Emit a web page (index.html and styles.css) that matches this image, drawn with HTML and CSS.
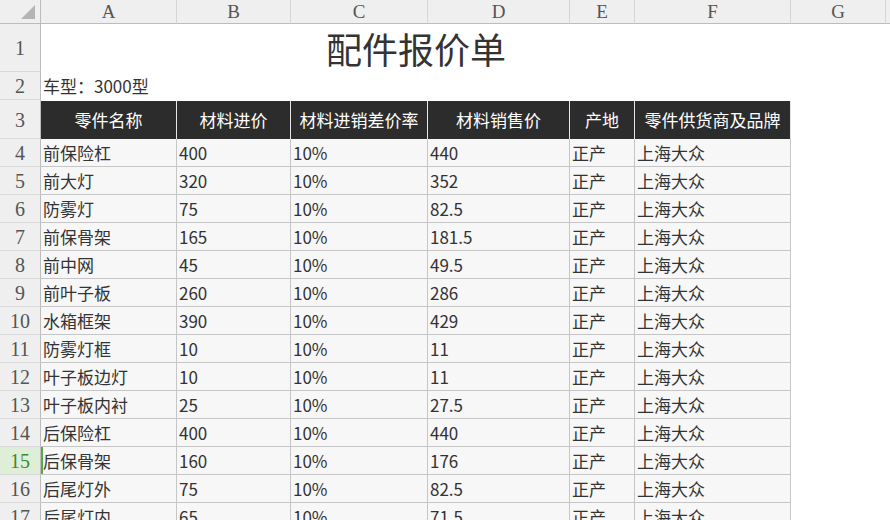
FILE: index.html
```html
<!DOCTYPE html>
<html lang="zh">
<head>
<meta charset="utf-8">
<link rel="stylesheet" href="styles.css">
</head>
<body>
<div class="sheet">
  <div class="ch corner"><span class="tri"></span></div>
  <div class="ch">A</div><div class="ch">B</div><div class="ch">C</div><div class="ch">D</div><div class="ch">E</div><div class="ch">F</div><div class="ch">G</div><div class="ch last"></div>

  <div class="rh">1</div>
  <div class="title">配件报价单</div><div class="blank"></div><div class="blank"></div>

  <div class="rh">2</div>
  <div class="car">车型：3000型</div><div class="blank"></div><div class="blank"></div><div class="blank"></div><div class="blank"></div><div class="blank"></div><div class="blank"></div><div class="blank"></div>

  <div class="rh">3</div>
  <div class="hd">零件名称</div><div class="hd">材料进价</div><div class="hd">材料进销差价率</div><div class="hd">材料销售价</div><div class="hd">产地</div><div class="hd">零件供货商及品牌</div><div class="blank"></div><div class="blank"></div>

  <div class="rh">4</div><div class="c">前保险杠</div><div class="c">400</div><div class="c">10%</div><div class="c">440</div><div class="c">正产</div><div class="c">上海大众</div><div class="blank"></div><div class="blank"></div>
  <div class="rh">5</div><div class="c">前大灯</div><div class="c">320</div><div class="c">10%</div><div class="c">352</div><div class="c">正产</div><div class="c">上海大众</div><div class="blank"></div><div class="blank"></div>
  <div class="rh">6</div><div class="c">防雾灯</div><div class="c">75</div><div class="c">10%</div><div class="c">82.5</div><div class="c">正产</div><div class="c">上海大众</div><div class="blank"></div><div class="blank"></div>
  <div class="rh">7</div><div class="c">前保骨架</div><div class="c">165</div><div class="c">10%</div><div class="c">181.5</div><div class="c">正产</div><div class="c">上海大众</div><div class="blank"></div><div class="blank"></div>
  <div class="rh">8</div><div class="c">前中网</div><div class="c">45</div><div class="c">10%</div><div class="c">49.5</div><div class="c">正产</div><div class="c">上海大众</div><div class="blank"></div><div class="blank"></div>
  <div class="rh">9</div><div class="c">前叶子板</div><div class="c">260</div><div class="c">10%</div><div class="c">286</div><div class="c">正产</div><div class="c">上海大众</div><div class="blank"></div><div class="blank"></div>
  <div class="rh">10</div><div class="c">水箱框架</div><div class="c">390</div><div class="c">10%</div><div class="c">429</div><div class="c">正产</div><div class="c">上海大众</div><div class="blank"></div><div class="blank"></div>
  <div class="rh">11</div><div class="c">防雾灯框</div><div class="c">10</div><div class="c">10%</div><div class="c">11</div><div class="c">正产</div><div class="c">上海大众</div><div class="blank"></div><div class="blank"></div>
  <div class="rh">12</div><div class="c">叶子板边灯</div><div class="c">10</div><div class="c">10%</div><div class="c">11</div><div class="c">正产</div><div class="c">上海大众</div><div class="blank"></div><div class="blank"></div>
  <div class="rh">13</div><div class="c">叶子板内衬</div><div class="c">25</div><div class="c">10%</div><div class="c">27.5</div><div class="c">正产</div><div class="c">上海大众</div><div class="blank"></div><div class="blank"></div>
  <div class="rh">14</div><div class="c">后保险杠</div><div class="c">400</div><div class="c">10%</div><div class="c">440</div><div class="c">正产</div><div class="c">上海大众</div><div class="blank"></div><div class="blank"></div>
  <div class="rh active">15</div><div class="c selected">后保骨架</div><div class="c">160</div><div class="c">10%</div><div class="c">176</div><div class="c">正产</div><div class="c">上海大众</div><div class="blank"></div><div class="blank"></div>
  <div class="rh">16</div><div class="c">后尾灯外</div><div class="c">75</div><div class="c">10%</div><div class="c">82.5</div><div class="c">正产</div><div class="c">上海大众</div><div class="blank"></div><div class="blank"></div>
  <div class="rh">17</div><div class="c">后尾灯内</div><div class="c">65</div><div class="c">10%</div><div class="c">71.5</div><div class="c">正产</div><div class="c">上海大众</div><div class="blank"></div><div class="blank"></div>
</div>
</body>
</html>
```

FILE: styles.css
```css
html, body {
  margin: 0;
  padding: 0;
  background: #ffffff;
  overflow: hidden;
  width: 890px;
  height: 520px;
}

.sheet {
  display: grid;
  grid-template-columns: 41px 136px 114px 137px 142px 65px 156px 95px 4px;
  grid-template-rows: 24px 48px 28px 39px repeat(14, 28px);
  font-family: "Noto Sans CJK SC", "Noto Sans", sans-serif;
  font-size: 17px;
  color: #333333;
}

.ch {
  background: #efefef;
  border-right: 1px solid #d6d6d6;
  border-bottom: 1px solid #bcbcbc;
  font-family: "Liberation Serif", serif;
  font-size: 19px;
  color: #555555;
  display: flex;
  align-items: center;
  justify-content: center;
  box-sizing: border-box;
}

.ch.last {
  border-right: none;
}

.corner {
  position: relative;
  border-right: 1px solid #bcbcbc;
}

.tri {
  position: absolute;
  right: 5px;
  bottom: 4px;
  width: 0;
  height: 0;
  border-left: 14px solid transparent;
  border-bottom: 14px solid #b4b4b4;
}

.rh {
  background: #efefef;
  border-right: 1px solid #bcbcbc;
  border-bottom: 1px solid #d9d9d9;
  font-family: "Liberation Serif", serif;
  font-size: 20px;
  color: #555555;
  display: flex;
  align-items: center;
  justify-content: center;
  box-sizing: border-box;
  padding-top: 2px;
}

.rh.active {
  background: #dfeed6;
  color: #3c8a2e;
}

.title {
  grid-column: 2 / 8;
  display: flex;
  align-items: center;
  justify-content: center;
  font-size: 36px;
  color: #333333;
  padding-bottom: 1px;
}

.blank {
  background: #ffffff;
}

.car {
  display: flex;
  align-items: flex-end;
  padding: 0 0 2px 2px;
  white-space: nowrap;
  font-size: 17px;
  color: #333333;
}

.hd {
  background: #2c2c2c;
  color: #ffffff;
  border-right: 1px solid #e6e6e6;
  margin-top: 1px;
  display: flex;
  align-items: center;
  justify-content: center;
  white-space: nowrap;
  box-sizing: border-box;
  padding-bottom: 2px;
}

.c {
  background: #f7f7f7;
  border-right: 1px solid #c6c6c6;
  border-bottom: 1px solid #c6c6c6;
  display: flex;
  align-items: center;
  padding-left: 2px;
  box-sizing: border-box;
  white-space: nowrap;
  color: #333333;
}

.c.selected {
  box-shadow: inset 2px 0 0 #5aa846;
}
```
